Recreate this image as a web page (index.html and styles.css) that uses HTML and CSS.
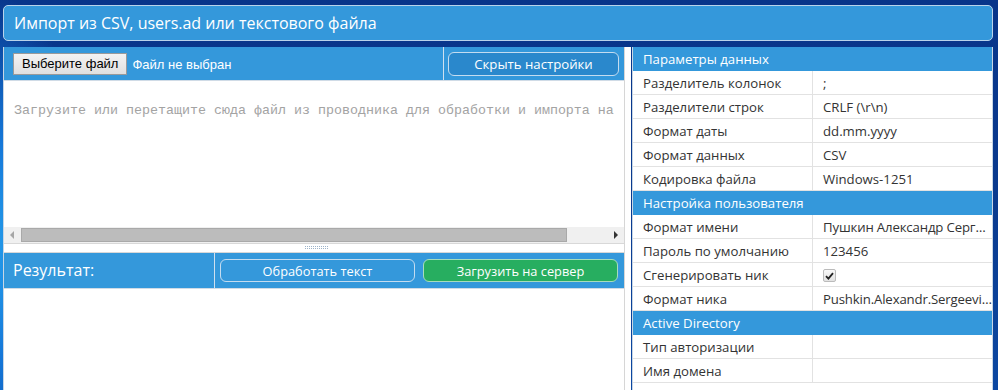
FILE: index.html
```html
<!DOCTYPE html>
<html lang="ru">
<head>
<meta charset="utf-8">
<link rel="stylesheet" href="styles.css">
</head>
<body>
<div class="page">
  <div class="title">Импорт из CSV, users.ad или текстового файла</div>
  <div class="main">
    <div class="left">
      <div class="left-inner">
        <div class="toolbar">
          <div class="file-cell">
            <span class="file-btn">Выберите файл</span>
            <span class="file-name">Файл не выбран</span>
          </div>
          <div class="hide-cell">
            <span class="btn btn-blue btn-hide">Скрыть настройки</span>
          </div>
        </div>
        <div class="editor">
          <div class="placeholder">Загрузите или перетащите сюда файл из проводника для обработки и импорта на</div>
        </div>
        <div class="hscroll">
          <span class="arrow arrow-left"></span>
          <div class="track"><div class="thumb"></div></div>
          <span class="arrow arrow-right"></span>
        </div>
        <div class="splitter"><span class="grip"></span></div>
        <div class="result-bar">
          <div class="result-label">Результат:</div>
          <div class="result-actions">
            <span class="btn btn-blue btn-process">Обработать текст</span>
            <span class="btn btn-green btn-upload">Загрузить на сервер</span>
          </div>
        </div>
        <div class="result-body"></div>
      </div>
    </div>
    <div class="right">
      <table class="props">
        <tr class="group"><td colspan="2">Параметры данных</td></tr>
        <tr><td>Разделитель колонок</td><td>;</td></tr>
        <tr><td>Разделители строк</td><td>CRLF (\r\n)</td></tr>
        <tr><td>Формат даты</td><td>dd.mm.yyyy</td></tr>
        <tr><td>Формат данных</td><td>CSV</td></tr>
        <tr><td>Кодировка файла</td><td>Windows-1251</td></tr>
        <tr class="group"><td colspan="2">Настройка пользователя</td></tr>
        <tr><td>Формат имени</td><td><span class="ellip">Пушкин Александр Сергеевич</span></td></tr>
        <tr><td>Пароль по умолчанию</td><td>123456</td></tr>
        <tr><td>Сгенерировать ник</td><td><span class="check"><svg width="9" height="8" viewBox="0 0 9 8"><path d="M1 4.2 L3.4 6.6 L8 1.2" fill="none" stroke="#222" stroke-width="1.8"/></svg></span></td></tr>
        <tr><td>Формат ника</td><td><span class="ellip">Pushkin.Alexandr.Sergeevich</span></td></tr>
        <tr class="group"><td colspan="2">Active Directory</td></tr>
        <tr><td>Тип авторизации</td><td></td></tr>
        <tr><td>Имя домена</td><td></td></tr>
      </table>
    </div>
  </div>
</div>
</body>
</html>
```

FILE: styles.css
```css
html, body {
  margin: 0;
  padding: 0;
  height: 100%;
  overflow: hidden;
}
body {
  background:
    radial-gradient(ellipse 120px 260px at -20px 250px, #2aa8f0 0%, #1577d8 45%, rgba(16,80,180,0) 100%),
    linear-gradient(180deg, #08358a 0%, #0a3a8e 50%, #0c48a2 100%);
  font-family: "Open Sans", "Noto Sans", sans-serif;
}
.page {
  padding: 5px 5px 0 3px;
}
.title {
  height: 34px;
  background: #3498db;
  border: 1px solid #b9d3ea;
  border-radius: 5px;
  color: #fff;
  font-size: 16px;
  line-height: 34px;
  padding-left: 10px;
}
.main {
  display: flex;
  margin-top: 6px;
  height: 344px;
}
.left {
  width: 628px;
  background: #fff;
  border-left: 1px solid #c8d6e4;
  box-sizing: border-box;
}
.left-inner {
  width: 620px;
  border-right: 1px solid #d6d6d6;
  height: 100%;
  display: flex;
  flex-direction: column;
}
.toolbar {
  display: flex;
  height: 33px;
  background: #3498db;
  border-bottom: 1px solid #d0dbe6;
}
.file-cell {
  width: 430px;
  border-right: 1px solid #cfe0ef;
  display: flex;
  align-items: center;
  padding-left: 9px;
  gap: 5px;
}
.file-btn {
  font-family: "Liberation Sans", Arial, sans-serif;
  font-size: 13px;
  color: #000;
  background: linear-gradient(#f3f3f3, #e0e0e0);
  border: 1px solid #9a9a9a;
  padding: 2px 8px 2px 8px;
  height: 16px;
  line-height: 16px;
  margin-top: 1px;
}
.file-name {
  font-family: "Liberation Sans", Arial, sans-serif;
  font-size: 13px;
  color: #fff;
  margin-top: 1px;
}
.hide-cell {
  flex: 1;
  display: flex;
  align-items: center;
  padding: 0 4px 0 4px;
}
.btn {
  display: flex;
  align-items: center;
  justify-content: center;
  box-sizing: border-box;
  border-radius: 6px;
  color: #fff;
  font-size: 12.8px;
  height: 23px;
}
.btn-blue {
  border: 1px solid #c4dcf0;
  background: #3498db;
}
.btn-hide {
  width: 171px;
  height: 24px;
  background: #2a88cc;
  font-size: 13.2px;
}
.btn-green {
  border: 1px solid #a8dcbc;
  background: #27ae60;
}
.editor {
  height: 146px;
  padding: 0 0 0 10px;
}
.placeholder {
  font-family: "Liberation Mono", "Courier New", monospace;
  font-size: 13.33px;
  color: #a3a3a3;
  white-space: nowrap;
  overflow: hidden;
  margin-top: 22px;
}
.hscroll {
  height: 16px;
  background: #f0f0f0;
  display: flex;
  align-items: center;
  border-bottom: 1px solid #d8d8d8;
}
.arrow {
  width: 16px;
  height: 16px;
  position: relative;
}
.arrow::before {
  content: "";
  position: absolute;
  top: 4px;
  border-top: 4px solid transparent;
  border-bottom: 4px solid transparent;
}
.arrow-left::before {
  left: 6px;
  border-right: 4px solid #a6a6a6;
}
.arrow-right::before {
  left: 6px;
  border-left: 4px solid #333;
}
.track {
  flex: 1;
  height: 14px;
}
.thumb {
  width: 544px;
  height: 12px;
  margin-left: 1px;
  background: #bcbcbc;
  border: 1px solid #a9a9a9;
}
.splitter {
  height: 8px;
  background: #fff;
  display: flex;
  justify-content: center;
  border-bottom: 1px solid #d8d8d8;
}
.grip {
  width: 23px;
  height: 1px;
  margin-top: 2px;
  margin-left: 4px;
  border-top: 1px dotted #9db3c9;
  border-bottom: 1px dotted #9db3c9;
}
.result-bar {
  height: 35px;
  background: #3498db;
  display: flex;
  border-bottom: 1px solid #d0dbe6;
}
.result-label {
  width: 201px;
  border-right: 1px solid #cfe0ef;
  color: #fff;
  font-size: 16px;
  line-height: 35px;
  padding-left: 9px;
}
.result-actions {
  flex: 1;
  display: flex;
  align-items: center;
  gap: 8px;
  padding-left: 5px;
}
.btn-process {
  width: 195px;
}
.btn-upload {
  width: 195px;
}
.result-body {
  flex: 1;
  background: #fff;
}
.right {
  width: 361px;
  margin-left: 1px;
  background: #fff;
  border: 1px solid #c8d6e4;
  border-top: 0;
  box-sizing: border-box;
}
.props {
  width: 100%;
  border-collapse: collapse;
  table-layout: fixed;
  font-size: 13.2px;
  color: #333;
}
.props td {
  height: 23px;
  padding: 0 0 0 10px;
  border-bottom: 1px solid #e2e2e2;
  white-space: nowrap;
  overflow: hidden;
}
.props td:first-child {
  width: 169px;
  border-right: 1px solid #e2e2e2;
}
.props tr.group td {
  background: #3498db;
  color: #fff;
  border-right: 0;
  border-bottom: 1px solid #3498db;
}
.ellip {
  display: block;
  overflow: hidden;
  text-overflow: ellipsis;
  letter-spacing: -0.15px;
}
.check {
  display: inline-flex;
  width: 11px;
  height: 11px;
  border: 1px solid #bbb;
  border-radius: 2px;
  background: linear-gradient(#f8f8f8, #e2e2e2);
  align-items: center;
  justify-content: center;
  vertical-align: middle;
}
```
